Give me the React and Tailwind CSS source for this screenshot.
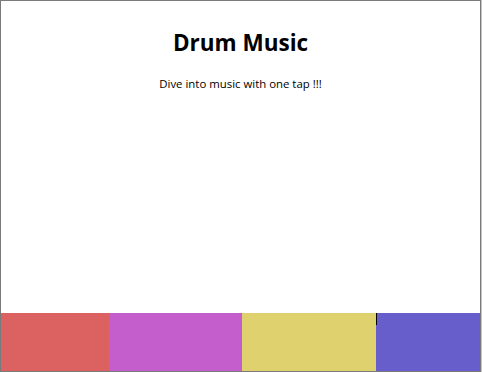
const pads = [
  { key: 'red', className: 'w-[108px] bg-[#dc6262]' },
  { key: 'purple', className: 'w-[133px] bg-[#c45ecc]' },
  { key: 'yellow', className: 'w-[134px] bg-[#dfd26e]' },
  { key: 'blue', className: 'relative w-[104px] bg-[#675ecc]' }
];

export default function App() {
  return (
    <div className="h-[372px] w-[482px] bg-[#c4c4c4]">
      <div
        className="flex h-[372px] w-[481px] flex-col border border-[#7a7a7a] bg-white text-black"
        style={{ fontFamily: '"Open Sans", "Noto Sans", sans-serif' }}
      >
        <div className="flex h-[312px] flex-col items-center">
          <h1 className="mt-[27px] text-[22.5px] leading-[30px] font-bold">Drum Music</h1>
          <p className="mt-[18px] text-[11.4px] leading-[16px]">Dive into music with one tap !!!</p>
        </div>
        <div className="flex h-[58px]">
          {pads.map(pad => (
            <div key={pad.key} className={pad.className}>
              {pad.key === 'blue' && <span className="absolute top-0 left-0 h-[12px] w-px bg-black" />}
            </div>
          ))}
        </div>
      </div>
    </div>
  );
}
